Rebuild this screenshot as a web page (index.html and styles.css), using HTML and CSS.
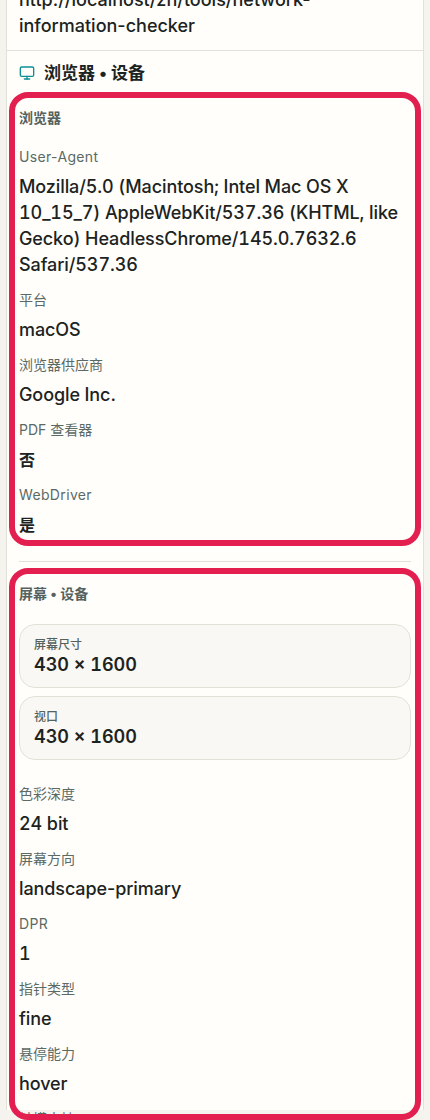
FILE: index.html
```html
<!DOCTYPE html>
<html lang="zh">
<head>
  <meta charset="UTF-8">
  <title>网络信息检查</title>
  <link rel="stylesheet" href="styles.css">
</head>
<body>
  <div class="page">
    <div class="panel">
      <!-- URL row, scrolled partly out of view -->
      <div class="url-row">http://localhost/zh/tools/network-information-checker</div>

      <div class="section">
        <h2 class="section-title">
          <svg class="title-icon" viewBox="0 0 24 24" fill="none" stroke="currentColor" stroke-width="2" stroke-linecap="round" stroke-linejoin="round">
            <rect x="2" y="3" width="20" height="14" rx="2"></rect>
            <path d="M8 21h8"></path>
            <path d="M12 17v4"></path>
          </svg>
          浏览器 • 设备
        </h2>

        <div class="group group-browser">
          <h3 class="group-title">浏览器</h3>
          <div class="field">
            <div class="field-label latin">User-Agent</div>
            <div class="field-value nums">Mozilla/5.0 (Macintosh; Intel Mac OS X 10_15_7) AppleWebKit/537.36 (KHTML, like Gecko) HeadlessChrome/145.0.7632.6 Safari/537.36</div>
          </div>
          <div class="field">
            <div class="field-label">平台</div>
            <div class="field-value">macOS</div>
          </div>
          <div class="field">
            <div class="field-label">浏览器供应商</div>
            <div class="field-value">Google Inc.</div>
          </div>
          <div class="field">
            <div class="field-label">PDF 查看器</div>
            <div class="field-value field-value-cjk">否</div>
          </div>
          <div class="field">
            <div class="field-label latin">WebDriver</div>
            <div class="field-value field-value-cjk">是</div>
          </div>
        </div>

        <hr class="divider">

        <div class="group group-screen">
          <h3 class="group-title">屏幕 • 设备</h3>
          <div class="stat-card">
            <div class="stat-label">屏幕尺寸</div>
            <div class="stat-value">430 × 1600</div>
          </div>
          <div class="stat-card">
            <div class="stat-label">视口</div>
            <div class="stat-value">430 × 1600</div>
          </div>
          <div class="field field-first">
            <div class="field-label">色彩深度</div>
            <div class="field-value nums">24 bit</div>
          </div>
          <div class="field">
            <div class="field-label">屏幕方向</div>
            <div class="field-value">landscape-primary</div>
          </div>
          <div class="field">
            <div class="field-label latin">DPR</div>
            <div class="field-value nums">1</div>
          </div>
          <div class="field">
            <div class="field-label">指针类型</div>
            <div class="field-value">fine</div>
          </div>
          <div class="field">
            <div class="field-label">悬停能力</div>
            <div class="field-value">hover</div>
          </div>
          <div class="field">
            <div class="field-label">触摸支持</div>
            <div class="field-value field-value-cjk">否</div>
          </div>
        </div>
      </div>
    </div>
  </div>
</body>
</html>
```

FILE: styles.css
```css
* { box-sizing: border-box; }

html, body {
  margin: 0;
  height: 1120px;
  overflow: hidden;
}

body {
  background: #f4f3ee;
  color: #1c2321;
  font-family: Inter, "Noto Sans CJK SC", sans-serif;
}

.page {
  padding: 0 6px;
}

.panel {
  background: #fffefb;
  border-left: 1px solid #e2e1d8;
  border-right: 1px solid #e2e1d8;
  width: 418px;
}

/* Top row is cut off by the scroll position */
.url-row {
  margin-top: -25px;
  padding: 12px 12px 11px;
  font-size: 18px;
  line-height: 26px;
  font-weight: 500;
  border-bottom: 1px solid #e2e1d8;
}

.section {
  padding: 10px 12px 0;
}

.section-title {
  display: flex;
  align-items: center;
  gap: 9px;
  margin: 0 0 17px;
  font-size: 17px;
  line-height: 24px;
  font-weight: 700;
}

.title-icon {
  width: 16px;
  height: 16px;
  color: #0e8f96;
  flex-shrink: 0;
}

.group {
  outline: 6px solid #e31f4f;
  outline-offset: 4px;
  border-radius: 9px;
  padding-top: 6px;
}

.group-browser {
  height: 434px;
}

.group-screen {
  height: 532px;
  overflow: clip;
  overflow-clip-margin: 4px;
}

.group-title {
  margin: 0 0 18px;
  font-size: 14px;
  line-height: 20px;
  font-weight: 700;
  color: #55625e;
}

.group-screen .group-title {
  margin-bottom: 20px;
}

.field {
  margin-bottom: 11px;
}

.field-first {
  margin-top: 23px;
}

.field-label {
  font-size: 14px;
  line-height: 21px;
  color: #5b6a65;
  margin-bottom: 7px;
}

.latin {
  letter-spacing: 0.35px;
}

.field-value {
  font-size: 18px;
  line-height: 26px;
  font-weight: 500;
  letter-spacing: -0.1px;
}

.field-value-cjk {
  font-size: 16px;
  font-weight: 700;
}

.nums {
  font-variant-numeric: tabular-nums;
}

.divider {
  border: none;
  height: 1px;
  background: #e2e1d8;
  margin: 25px 0 16px;
}

.stat-card {
  background: #f9f8f4;
  border: 1px solid #e2e1d8;
  border-radius: 16px;
  padding: 11px 14px 0;
  height: 64px;
  margin-bottom: 8px;
}

.stat-label {
  font-size: 12px;
  line-height: 18px;
  font-weight: 500;
  color: #55625e;
}

.stat-value {
  font-size: 18px;
  line-height: 22px;
  font-weight: 600;
  font-variant-numeric: tabular-nums;
}
```
